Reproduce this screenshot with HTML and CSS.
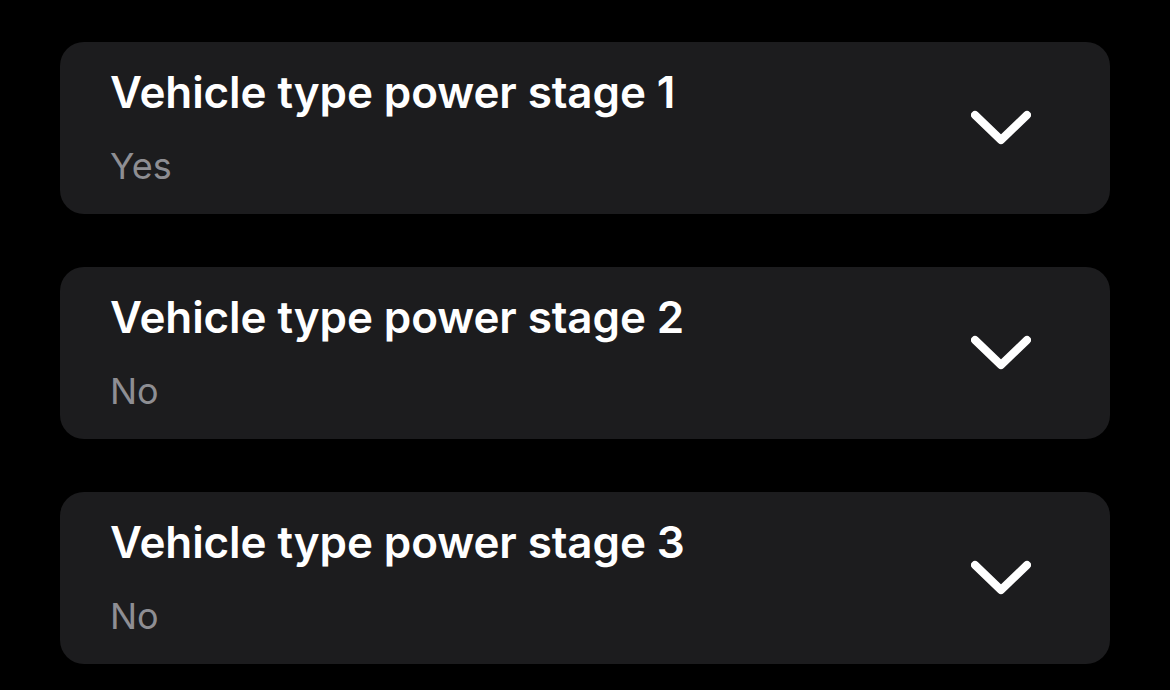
FILE: index.html
```html
<!DOCTYPE html>
<html>
<head>
<meta charset="utf-8">
<link rel="stylesheet" href="styles.css">
</head>
<body>
<div class="list">
  <div class="card">
    <div class="text">
      <div class="title">Vehicle type power stage 1</div>
      <div class="value">Yes</div>
    </div>
    <svg class="chev" width="60" height="36" viewBox="0 0 60 36"><path d="M4 5 L30 30 L56 5" fill="none" stroke="#fff" stroke-width="8" stroke-linecap="round" stroke-linejoin="round"/></svg>
  </div>
  <div class="card">
    <div class="text">
      <div class="title">Vehicle type power stage 2</div>
      <div class="value">No</div>
    </div>
    <svg class="chev" width="60" height="36" viewBox="0 0 60 36"><path d="M4 5 L30 30 L56 5" fill="none" stroke="#fff" stroke-width="8" stroke-linecap="round" stroke-linejoin="round"/></svg>
  </div>
  <div class="card">
    <div class="text">
      <div class="title">Vehicle type power stage 3</div>
      <div class="value">No</div>
    </div>
    <svg class="chev" width="60" height="36" viewBox="0 0 60 36"><path d="M4 5 L30 30 L56 5" fill="none" stroke="#fff" stroke-width="8" stroke-linecap="round" stroke-linejoin="round"/></svg>
  </div>
</div>
</body>
</html>
```
FILE: styles.css
```css
html, body {
  margin: 0;
  padding: 0;
  background: #000;
  height: 100%;
  overflow: hidden;
}
body {
  font-family: Inter, "Noto Sans", sans-serif;
}
.list {
  display: flex;
  flex-direction: column;
  gap: 53px;
  padding: 42px 60px 0 60px;
}
.card {
  background: #1c1c1e;
  border-radius: 24px;
  height: 172px;
  box-sizing: border-box;
  padding: 24px 79px 0 50px;
  display: flex;
  align-items: flex-start;
  justify-content: space-between;
}
.text {
  display: flex;
  flex-direction: column;
  gap: 27px;
}
.title {
  color: #fff;
  font-size: 44px;
  font-weight: 600;
  line-height: 52px;
  letter-spacing: -0.1px;
}
.value {
  color: #8e8e93;
  font-size: 36px;
  font-weight: 400;
  line-height: 42px;
}
.chev {
  display: block;
  align-self: center;
  margin-top: -24px;
}
```
